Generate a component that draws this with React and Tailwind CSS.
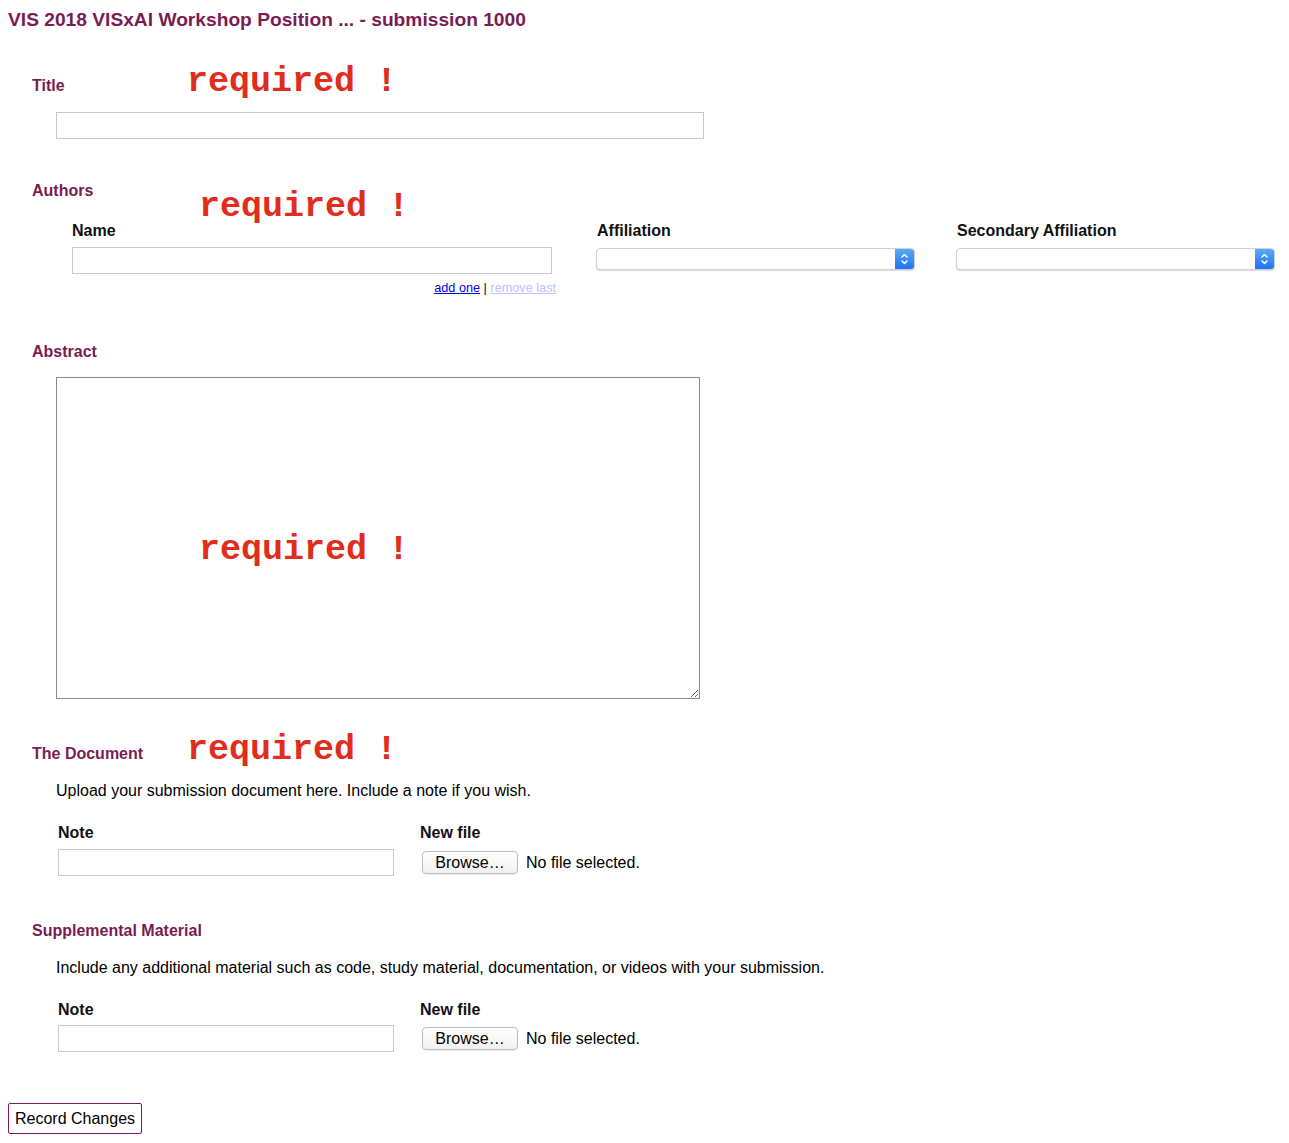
import React from "react";

const PURPLE = "text-[#7a1c52]";

function Required({ className = "" }) {
  return (
    <span
      className={`font-bold text-[35px] leading-none text-[#e22c1c] whitespace-pre ${className}`}
      style={{ fontFamily: '"Liberation Mono", "Courier New", monospace' }}
    >
      required !
    </span>
  );
}

function TextBox({ className = "" }) {
  return <input type="text" className={`block border border-[#c9c9c9] bg-white h-[27px] outline-none ${className}`} />;
}

function MacSelect() {
  return (
    <div className="relative h-[22px] w-[319px] rounded-[4px] border border-[#d2d2d2] bg-white shadow-[0_1px_1px_rgba(0,0,0,0.15)] overflow-hidden">
      <div className="absolute right-0 top-0 bottom-0 w-[19px] bg-gradient-to-b from-[#5aa9fb] to-[#1b74f0] flex items-center justify-center">
        <svg width="9" height="14" viewBox="0 0 9 14" fill="none" stroke="white" strokeWidth="1.5" strokeLinecap="round" strokeLinejoin="round">
          <path d="M2 5 L4.5 2.5 L7 5" />
          <path d="M2 9 L4.5 11.5 L7 9" />
        </svg>
      </div>
    </div>
  );
}

function FileRow() {
  return (
    <div className="flex items-center">
      <TextBox className="w-[336px]" />
      <div className="ml-[28px] flex items-center">
        <button className="h-[23px] w-[96px] rounded-[4px] border border-[#bdbdbd] bg-gradient-to-b from-white to-[#f1f1f1] text-[16px] leading-none text-black shadow-[0_1px_0_rgba(0,0,0,0.06)]">
          Browse…
        </button>
        <span className="ml-[8px] text-[16px] text-black">No file selected.</span>
      </div>
    </div>
  );
}

function FileLabels() {
  return (
    <div className="flex text-[16px] leading-[18px] font-bold text-[#111]">
      <div className="w-[362px]">Note</div>
      <div>New file</div>
    </div>
  );
}

export default function App() {
  return (
    <div
      className="min-h-screen bg-white pl-2 pt-[10px] pb-[10px] text-black"
      style={{ fontFamily: '"Liberation Sans", Arial, Helvetica, sans-serif' }}
    >
      <h1 className={`text-[19.2px] leading-[20px] font-bold ${PURPLE}`}>
        VIS 2018 VISxAI Workshop Position ... - submission 1000
      </h1>

      {/* Title */}
      <div className="mt-[35px] ml-6 flex items-baseline">
        <div className={`w-[155px] text-[16px] font-bold ${PURPLE}`}>Title</div>
        <Required />
      </div>
      <TextBox className="mt-[12px] ml-[48px] w-[648px]" />

      {/* Authors */}
      <div className="mt-[43px] ml-6 flex items-start">
        <div className={`w-[167px] text-[16px] leading-[18px] font-bold ${PURPLE}`}>Authors</div>
        <Required className="mt-[8px]" />
      </div>
      <div className="ml-[64px] flex mt-[-3px]">
        <div className="w-[480px]">
          <div className="text-[16px] leading-[18px] font-bold text-[#111]">Name</div>
          <TextBox className="mt-[7px] w-[480px]" />
          <div className="mt-[7px] mr-[-4px] text-right text-[12.7px] leading-[14px]">
            <a href="#" className="text-[#0000ee] underline">add one</a>
            <span> | </span>
            <a href="#" className="text-[#c0c0ff] underline">remove last</a>
          </div>
        </div>
        <div className="ml-[44px] w-[319px]">
          <div className="pl-[1px] text-[16px] leading-[18px] font-bold text-[#111]">Affiliation</div>
          <div className="mt-[8px]"><MacSelect /></div>
        </div>
        <div className="ml-[41px] w-[319px]">
          <div className="pl-[1px] text-[16px] leading-[18px] font-bold text-[#111]">Secondary Affiliation</div>
          <div className="mt-[8px]"><MacSelect /></div>
        </div>
      </div>

      {/* Abstract */}
      <div className={`mt-[48px] ml-6 text-[16px] leading-[18px] font-bold ${PURPLE}`}>Abstract</div>
      <div className="relative mt-[16px] ml-[48px] w-[644px] h-[322px]">
        <textarea className="block w-full h-full border border-[#8a8a8a] bg-white outline-none resize" />
        <Required className="absolute left-[143px] top-[156px] pointer-events-none" />
      </div>

      {/* The Document */}
      <div className="mt-[34px] ml-6 flex items-baseline">
        <div className={`w-[155px] text-[16px] font-bold ${PURPLE}`}>The Document</div>
        <Required />
      </div>
      <p className="mt-[14px] ml-[48px] text-[16px] leading-[18px]">
        Upload your submission document here. Include a note if you wish.
      </p>
      <div className="mt-[24px] ml-[50px]">
        <FileLabels />
        <div className="mt-[7px]"><FileRow /></div>
      </div>

      {/* Supplemental Material */}
      <div className={`mt-[46px] ml-6 text-[16px] leading-[18px] font-bold ${PURPLE}`}>Supplemental Material</div>
      <p className="mt-[19px] ml-[48px] text-[16px] leading-[18px]">
        Include any additional material such as code, study material, documentation, or videos with your submission.
      </p>
      <div className="mt-[24px] ml-[50px]">
        <FileLabels />
        <div className="mt-[6px]"><FileRow /></div>
      </div>

      <button className="mt-[51px] h-[31px] w-[134px] rounded-[2px] border border-[#7a1c52] bg-white text-[16px] text-black">
        Record Changes
      </button>
    </div>
  );
}
